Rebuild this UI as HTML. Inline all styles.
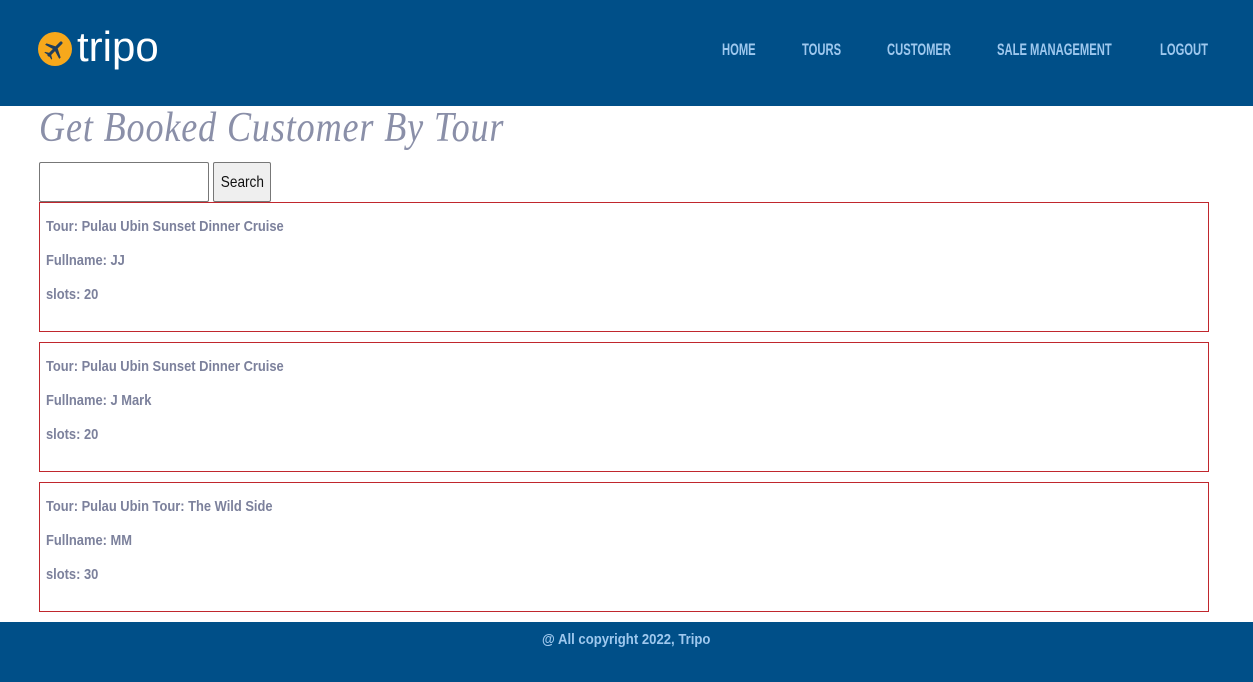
<!DOCTYPE html>
<html><head><meta charset="utf-8"><style>
*{box-sizing:border-box;margin:0;padding:0}
body{width:1253px;height:682px;background:#fff;font-family:"Liberation Sans",sans-serif;position:relative;overflow:hidden}
header{position:absolute;left:0;top:0;width:1253px;height:106px;background:#004f88}
.logo .c{position:absolute;left:38px;top:32px;width:34px;height:34px;border-radius:50%;background:#f7a81b}
.logo span{position:absolute;left:77px;top:22px;font-family:"Liberation Sans",sans-serif;color:#fff;font-size:42px;line-height:50px}
.n{position:absolute;top:40px;color:#9ec8ee;font-weight:bold;font-size:17px;transform:scaleX(0.66);transform-origin:left;white-space:nowrap}
h1{position:absolute;left:39px;top:104px;font-family:"Liberation Serif",serif;font-style:italic;font-weight:normal;font-size:42px;color:#8a8fa8;letter-spacing:1px;transform:scaleX(0.86);transform-origin:left;white-space:nowrap}
.inp{position:absolute;left:39px;top:162px;width:170px;height:40px;border:1px solid #777;border-radius:2px}
.btn{position:absolute;left:213px;top:162px;width:58px;height:40px;border:1px solid #777;border-radius:2px;background:#efefef;color:#111;text-align:center;line-height:40px}
.btn span{display:inline-block;font-size:16px;transform:scaleX(0.85)}
.card{position:absolute;left:39px;width:1170px;height:130px;border:1px solid #c0272d;padding:14px 0 0 6px}
.card p{color:#7c819c;font-size:15px;font-weight:bold;height:34px;line-height:20px;transform:scaleX(0.86);transform-origin:left;white-space:nowrap}
footer{position:absolute;left:0;top:622px;width:1253px;height:60px;background:#004f88;color:#9ec8ee;font-weight:bold;font-size:15px;text-align:center;padding-top:9px}
footer span{display:inline-block;transform:scaleX(0.875)}
</style></head><body>
<header>
<div class="logo"><div class="c"><svg width="34" height="34" viewBox="0 0 34 34"><g transform="rotate(45 17 17)" fill="#1f3d5c"><rect x="15.5" y="7" width="3" height="20" rx="1.5"/><path d="M17 14 L7 19 L7 21 L17 18 L27 21 L27 19 Z"/><path d="M17 23 L12 26 L12 27 L17 26 L22 27 L22 26 Z"/></g></svg></div><span>tripo</span></div>
<div class="n" style="left:722px">HOME</div>
<div class="n" style="left:802px">TOURS</div>
<div class="n" style="left:887px">CUSTOMER</div>
<div class="n" style="left:997px">SALE MANAGEMENT</div>
<div class="n" style="left:1160px">LOGOUT</div>
</header>
<h1>Get Booked Customer By Tour</h1>
<div class="inp"></div><div class="btn"><span>Search</span></div>
<div class="card" style="top:202px"><p>Tour: Pulau Ubin Sunset Dinner Cruise</p><p>Fullname: JJ</p><p>slots: 20</p></div>
<div class="card" style="top:342px"><p>Tour: Pulau Ubin Sunset Dinner Cruise</p><p>Fullname: J Mark</p><p>slots: 20</p></div>
<div class="card" style="top:482px"><p>Tour: Pulau Ubin Tour: The Wild Side</p><p>Fullname: MM</p><p>slots: 30</p></div>
<footer><span>@ All copyright 2022, Tripo</span></footer>
</body></html>
